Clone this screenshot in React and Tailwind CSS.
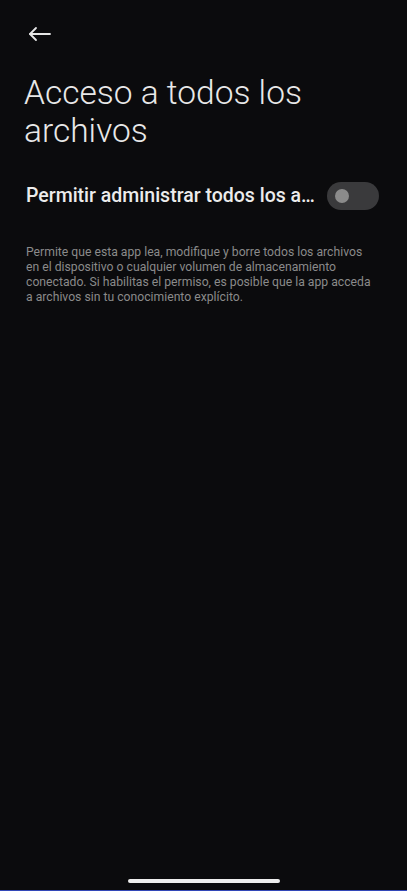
import React from 'react';

function BackArrow() {
  return (
    <svg width="24" height="16" viewBox="0 0 24 16" fill="none" stroke="#e6e6e6" strokeWidth="1.8" strokeLinecap="round" strokeLinejoin="round">
      <path d="M2 8h20" />
      <path d="M8 2L2 8l6 6" />
    </svg>
  );
}

export default function App() {
  return (
    <div className="w-[407px] h-[891px] bg-[#0b0b0d] flex flex-col overflow-hidden" style={{ fontFamily: 'Roboto, "Noto Sans", sans-serif' }}>
      <div className="flex-1 flex flex-col">
        {/* Top bar */}
        <div className="h-[34px] pl-[28px] pt-[26px] flex items-start">
          <BackArrow />
        </div>

        {/* Title */}
        <h1 className="mt-[40px] px-[24px] text-[33.5px] leading-[38px] font-light text-[#e8e8e8]">
          Acceso a todos los archivos
        </h1>

        {/* Switch row */}
        <div className="mt-[32px] pl-[26px] pr-[28px] flex items-center justify-between">
          <span className="text-[19.5px] leading-[28px] font-medium text-[#ececec] whitespace-nowrap">
            Permitir administrar todos los a…
          </span>
          <div className="w-[52px] h-[28px] rounded-full bg-[#3a3a3c] flex items-center pl-[8px]">
            <div className="w-[14px] h-[14px] rounded-full bg-[#8b8b8b]" />
          </div>
        </div>

        {/* Description */}
        <p className="mt-[35px] pl-[26px] pr-[30px] text-[12.2px] leading-[15px] text-[#8a8a8a]">
          Permite que esta app lea, modifique y borre todos los archivos en el dispositivo o cualquier volumen de almacenamiento conectado. Si habilitas el permiso, es posible que la app acceda a archivos sin tu conocimiento explícito.
        </p>
      </div>

      {/* Home indicator */}
      <div className="h-[18px] flex justify-center">
        <div className="w-[152px] h-[4px] rounded-full bg-[#eeeeee] mt-[7px]" />
      </div>
      <div className="h-[1px] bg-[#3347b8]" />
    </div>
  );
}
